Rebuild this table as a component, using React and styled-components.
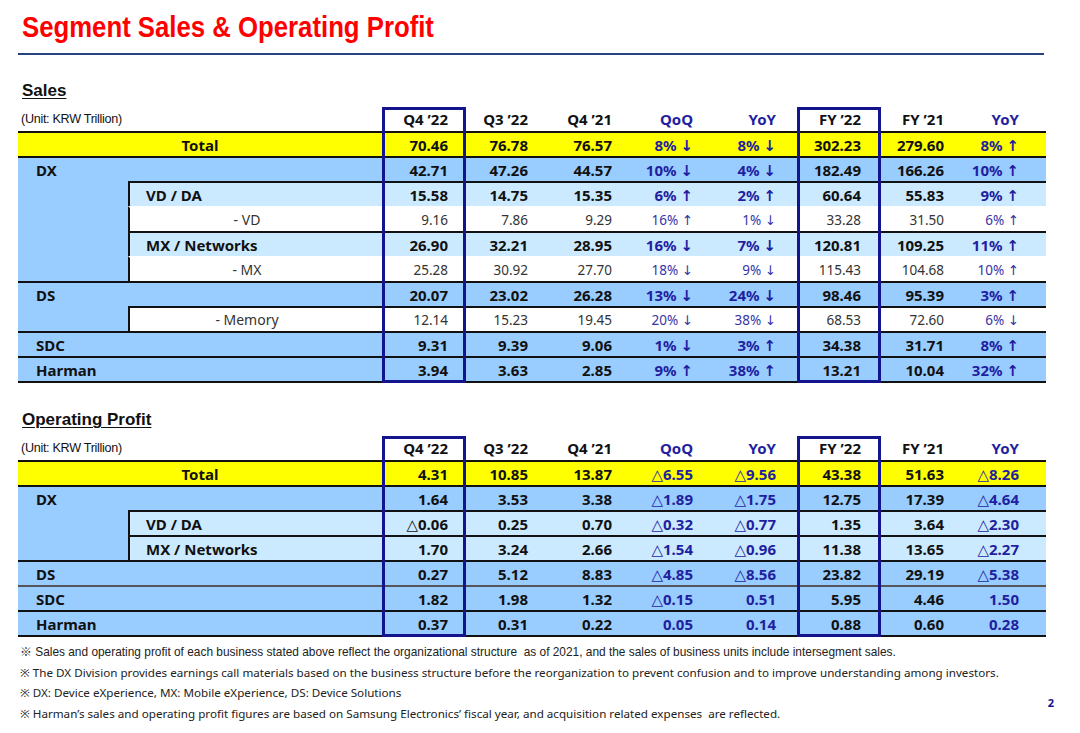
import React from 'react';
import styled, { createGlobalStyle } from 'styled-components';

const NAVY = '#14148f';
const LINE = '#111';
const CELL_FONT = `"Noto Sans", "DejaVu Sans", "Noto Sans CJK KR", sans-serif`;

const GlobalStyle = createGlobalStyle`
  html, body {
    margin: 0;
    padding: 0;
    background: #fff;
    overflow: hidden;
  }
  body {
    font-family: "Liberation Sans", Arial, sans-serif;
    color: #111;
  }
`;

const headers = ["Q4 ’22", "Q3 ’22", "Q4 ’21", 'QoQ', 'YoY', "FY ’22", "FY ’21", 'YoY'];
const pads = [17, 20, 19, 21, 21, 19, 19, 27];
const navyCols = [3, 4, 7];

const salesRows = [
  { kind: 'total', label: 'Total', values: ['70.46', '76.78', '76.57', '8% ↓', '8% ↓', '302.23', '279.60', '8% ↑'] },
  { kind: 'main', label: 'DX', values: ['42.71', '47.26', '44.57', '10% ↓', '4% ↓', '182.49', '166.26', '10% ↑'] },
  { kind: 'sub', label: 'VD / DA', line: true, values: ['15.58', '14.75', '15.35', '6% ↑', '2% ↑', '60.64', '55.83', '9% ↑'] },
  { kind: 'detail', label: '- VD', values: ['9.16', '7.86', '9.29', '16% ↑', '1% ↓', '33.28', '31.50', '6% ↑'] },
  { kind: 'sub', label: 'MX / Networks', line: true, values: ['26.90', '32.21', '28.95', '16% ↓', '7% ↓', '120.81', '109.25', '11% ↑'] },
  { kind: 'detail', label: '- MX', values: ['25.28', '30.92', '27.70', '18% ↓', '9% ↓', '115.43', '104.68', '10% ↑'] },
  { kind: 'main', label: 'DS', values: ['20.07', '23.02', '26.28', '13% ↓', '24% ↓', '98.46', '95.39', '3% ↑'] },
  { kind: 'detail', label: '- Memory', line: true, values: ['12.14', '15.23', '19.45', '20% ↓', '38% ↓', '68.53', '72.60', '6% ↓'] },
  { kind: 'main', label: 'SDC', values: ['9.31', '9.39', '9.06', '1% ↓', '3% ↑', '34.38', '31.71', '8% ↑'] },
  { kind: 'main', label: 'Harman', values: ['3.94', '3.63', '2.85', '9% ↑', '38% ↑', '13.21', '10.04', '32% ↑'] },
];

const profitRows = [
  { kind: 'total', label: 'Total', values: ['4.31', '10.85', '13.87', '△6.55', '△9.56', '43.38', '51.63', '△8.26'] },
  { kind: 'main', label: 'DX', values: ['1.64', '3.53', '3.38', '△1.89', '△1.75', '12.75', '17.39', '△4.64'] },
  { kind: 'sub', label: 'VD / DA', line: true, values: ['△0.06', '0.25', '0.70', '△0.32', '△0.77', '1.35', '3.64', '△2.30'] },
  { kind: 'sub', label: 'MX / Networks', line: true, values: ['1.70', '3.24', '2.66', '△1.54', '△0.96', '11.38', '13.65', '△2.27'] },
  { kind: 'main', label: 'DS', values: ['0.27', '5.12', '8.83', '△4.85', '△8.56', '23.82', '29.19', '△5.38'] },
  { kind: 'main', label: 'SDC', thin: true, values: ['1.82', '1.98', '1.32', '△0.15', '0.51', '5.95', '4.46', '1.50'] },
  { kind: 'main', label: 'Harman', values: ['0.37', '0.31', '0.22', '0.05', '0.14', '0.88', '0.60', '0.28'] },
];

const notes = [
  { arial: true, text: '※ Sales and operating profit of each business stated above reflect the organizational structure  as of 2021, and the sales of business units include intersegment sales.' },
  { text: '※ The DX Division provides earnings call materials based on the business structure before the reorganization to prevent confusion and to improve understanding among investors.' },
  { text: '※ DX: Device eXperience, MX: Mobile eXperience, DS: Device Solutions' },
  { text: '※ Harman’s sales and operating profit figures are based on Samsung Electronics’ fiscal year, and acquisition related expenses  are reflected.' },
];

const bgFor = (kind) => {
  if (kind === 'total') return '#ffff00';
  if (kind === 'main') return '#99ccff';
  if (kind === 'sub') return '#cceaff';
  return '#ffffff';
};

const DataTable = ({ rows }) => (
  <TableWrap>
    <HeaderRow>
      <UnitCell>(Unit: KRW Trillion)</UnitCell>
      {headers.map((h, i) => (
        <HeadCell key={i} $pad={pads[i]} $navy={navyCols.includes(i)}>{h}</HeadCell>
      ))}
    </HeaderRow>
    {rows.map((row) => {
      const full = row.kind === 'total' || row.kind === 'main';
      const line = full || row.line;
      const lineColor = row.thin ? '#555' : LINE;
      const light = row.kind === 'detail';
      return (
        <Row key={row.label}>
          {full ? (
            <LabelCell $bg={bgFor(row.kind)} $line={lineColor} $center={row.kind === 'total'}>
              {row.label}
            </LabelCell>
          ) : (
            <>
              <IndentCell />
              <SubLabelCell $bg={bgFor(row.kind)} $line={line ? LINE : 'transparent'} $light={light}>
                {row.label}
              </SubLabelCell>
            </>
          )}
          {row.values.map((v, i) => (
            <ValueCell
              key={i}
              $bg={bgFor(row.kind)}
              $line={line ? lineColor : 'transparent'}
              $pad={pads[i]}
              $navy={navyCols.includes(i)}
              $light={light}
            >
              {v}
            </ValueCell>
          ))}
        </Row>
      );
    })}
    <Highlight $col={0} />
    <Highlight $col={5} />
  </TableWrap>
);

export default function App() {
  return (
    <Page>
      <GlobalStyle />
      <Title>Segment Sales &amp; Operating Profit</Title>
      <Rule />
      <SectionTitle>Sales</SectionTitle>
      <DataTable rows={salesRows} />
      <SectionTitle $gap={27}>Operating Profit</SectionTitle>
      <DataTable rows={profitRows} />
      <Footer>
        <Notes>
          {notes.map((n, i) => (
            <Note key={i} $arial={n.arial}>{n.text}</Note>
          ))}
        </Notes>
        <PageNum>2</PageNum>
      </Footer>
    </Page>
  );
}

const Page = styled.div`
  width: 1080px;
  height: 733px;
  padding-left: 18px;
  box-sizing: border-box;
`;

const Title = styled.h1`
  margin: 0;
  padding: 9px 0 0 4px;
  font-family: "Liberation Sans", Arial, sans-serif;
  font-weight: 700;
  font-size: 30px;
  line-height: 36px;
  color: #ff0000;
  white-space: nowrap;
  transform: scaleX(0.858);
  transform-origin: 4px 0;
`;

const Rule = styled.div`
  margin-top: 8px;
  width: 1026px;
  height: 2px;
  background: #26427f;
`;

const SectionTitle = styled.div`
  margin-top: ${(p) => p.$gap ?? 26}px;
  padding-left: 4px;
  font-family: "Liberation Sans", Arial, sans-serif;
  font-weight: 700;
  font-size: 17px;
  line-height: 20px;
  text-decoration: underline;
  text-decoration-thickness: 1px;
  text-underline-offset: 2px;
  margin-bottom: 6px;
`;

const TableWrap = styled.div`
  position: relative;
  width: 1028px;
  border-bottom: 2px solid ${LINE};
`;

const gridCols = `110px 254px repeat(8, 83px)`;

const HeaderRow = styled.div`
  display: grid;
  grid-template-columns: ${gridCols};
  height: 24px;
  align-items: center;
`;

const UnitCell = styled.div`
  grid-column: span 2;
  padding-left: 3px;
  font-family: "Liberation Sans", Arial, sans-serif;
  font-size: 12.6px;
  letter-spacing: -0.3px;
`;

const HeadCell = styled.div`
  text-align: right;
  padding-right: ${(p) => p.$pad}px;
  font-family: ${CELL_FONT};
  font-weight: 700;
  font-size: 15px;
  color: ${(p) => (p.$navy ? '#1f1f9f' : '#111')};
`;

const Row = styled.div`
  display: grid;
  grid-template-columns: ${gridCols};
  height: 25px;
`;

const Cell = styled.div`
  box-sizing: border-box;
  height: 25px;
  display: flex;
  align-items: center;
  border-top: 2px solid ${(p) => p.$line};
  background: ${(p) => p.$bg};
  font-family: ${CELL_FONT};
  white-space: pre;
`;

const LabelCell = styled(Cell)`
  grid-column: span 2;
  justify-content: ${(p) => (p.$center ? 'center' : 'flex-start')};
  padding-left: ${(p) => (p.$center ? 0 : 18)}px;
  font-weight: 700;
  font-size: 15px;
  color: #111;
`;

const IndentCell = styled.div`
  height: 25px;
  background: #99ccff;
`;

const SubLabelCell = styled(Cell)`
  border-left: 2px solid ${LINE};
  justify-content: ${(p) => (p.$light ? 'center' : 'flex-start')};
  padding-left: ${(p) => (p.$light ? 0 : 16)}px;
  padding-right: ${(p) => (p.$light ? 18 : 0)}px;
  font-weight: ${(p) => (p.$light ? 400 : 700)};
  font-size: ${(p) => (p.$light ? 14 : 15)}px;
  color: ${(p) => (p.$light ? '#333' : '#111')};
`;

const ValueCell = styled(Cell)`
  justify-content: flex-end;
  padding-right: ${(p) => p.$pad}px;
  font-weight: ${(p) => (p.$light ? 400 : 700)};
  font-size: ${(p) => (p.$light ? 13.5 : 15)}px;
  color: ${(p) => (p.$navy ? (p.$light ? '#3535a8' : '#1f1f9f') : p.$light ? '#333' : '#111')};
`;

const Highlight = styled.div`
  position: absolute;
  top: 0;
  bottom: -2px;
  left: ${(p) => 364 + p.$col * 83}px;
  width: 84px;
  box-sizing: border-box;
  border: 3px solid ${NAVY};
  pointer-events: none;
`;

const Footer = styled.div`
  display: flex;
  width: 1036px;
  margin-top: 5px;
`;

const Notes = styled.div`
  flex: 1;
  padding-left: 2px;
`;

const Note = styled.div`
  font-family: ${(p) => (p.$arial ? `"Liberation Sans", Arial` : `"Noto Sans"`)}, "Noto Sans CJK KR", sans-serif;
  font-size: ${(p) => (p.$arial ? 11.9 : 11.65)}px;
  line-height: 20.7px;
  color: #222;
  white-space: pre;
`;

const PageNum = styled.div`
  padding-top: 53px;
  font-family: ${CELL_FONT};
  font-weight: 700;
  font-size: 11px;
  color: ${NAVY};
`;
